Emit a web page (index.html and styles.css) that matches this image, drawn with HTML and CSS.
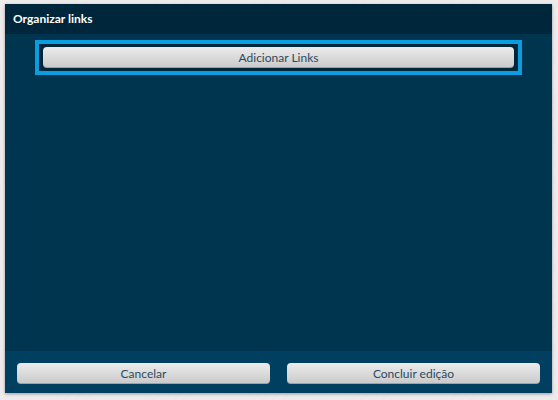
FILE: index.html
```html
<!DOCTYPE html>
<html lang="pt">
<head>
    <meta charset="UTF-8">
    <title>Organizar links</title>
    <link rel="stylesheet" href="styles.css">
</head>
<body>
    <div class="dialog">
        <div class="dialog-header">Organizar links</div>
        <div class="dialog-body">
            <div class="add-row">
                <button class="btn">Adicionar Links</button>
            </div>
        </div>
        <div class="dialog-footer">
            <button class="btn">Cancelar</button>
            <button class="btn">Concluir edição</button>
        </div>
    </div>
</body>
</html>
```

FILE: styles.css
```css
body {
    margin: 0;
    height: 400px;
    font-family: Lato, "Open Sans", sans-serif;
    background-color: #ececec;
    background-image: repeating-linear-gradient(135deg, #ececec 0, #ececec 6px, #f2e6e8 6px, #f2e6e8 7px);
    padding: 4px 6px 7px 5px;
    box-sizing: border-box;
}

.dialog {
    height: 389px;
    display: flex;
    flex-direction: column;
    background: #003a58;
    box-shadow: 0 1px 3px rgba(0, 0, 0, 0.35);
}

.dialog-header {
    height: 30px;
    line-height: 29px;
    padding-left: 8px;
    background: #00263b;
    color: #ffffff;
    font-size: 12px;
    font-weight: bold;
}

.dialog-body {
    flex: 1;
    padding: 6px 30px 0 30px;
    background: #003550;
}

.add-row {
    border: 4px solid #0a9ee0;
    background: #00263b;
    padding: 3px 4px;
    display: flex;
}

.btn {
    height: 21px;
    border: none;
    border-radius: 4px;
    background: linear-gradient(#ececec, #c9c9c9);
    box-shadow: inset 0 -1px 0 rgba(0, 0, 0, 0.2);
    color: #2c4a5e;
    font-family: Lato, "Open Sans", sans-serif;
    font-size: 12px;
    cursor: pointer;
}

.add-row .btn {
    flex: 1;
}

.dialog-footer {
    height: 42px;
    padding: 12px 12px 0 12px;
    box-sizing: border-box;
    background: #003f60;
    display: flex;
    gap: 17px;
}

.dialog-footer .btn {
    flex: 1;
}
```
